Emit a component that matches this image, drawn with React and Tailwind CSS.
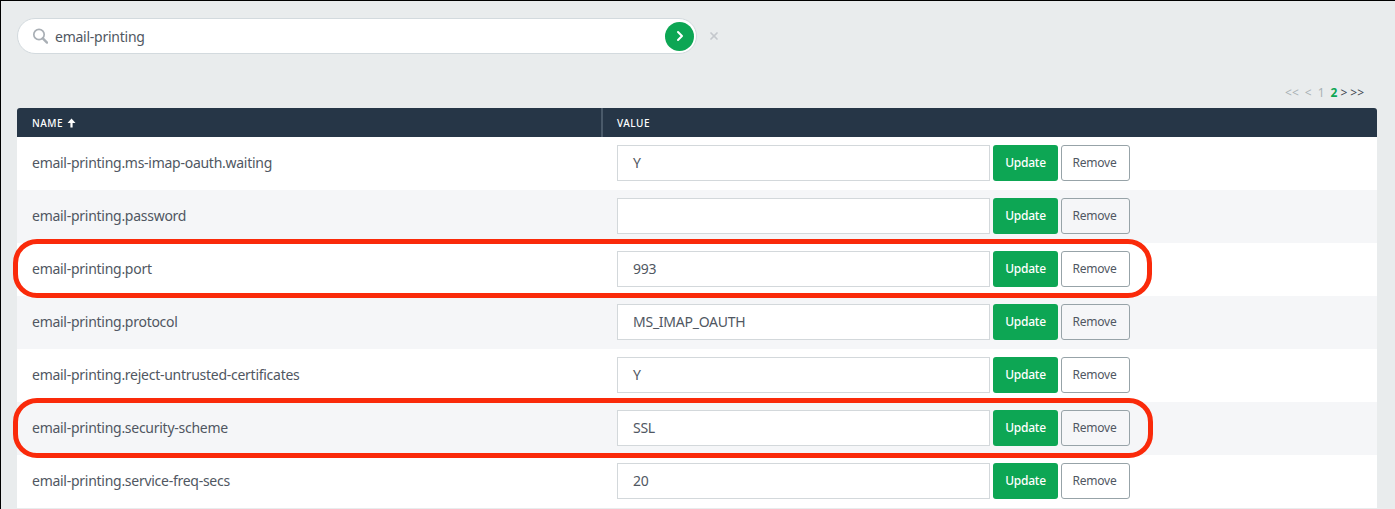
import { ChevronRight, X } from "lucide-react";

const rows = [
  { name: "email-printing.ms-imap-oauth.waiting", value: "Y" },
  { name: "email-printing.password", value: "" },
  { name: "email-printing.port", value: "993" },
  { name: "email-printing.protocol", value: "MS_IMAP_OAUTH" },
  { name: "email-printing.reject-untrusted-certificates", value: "Y" },
  { name: "email-printing.security-scheme", value: "SSL" },
  { name: "email-printing.service-freq-secs", value: "20" },
];

function Row({ row, index }) {
  const odd = index % 2 === 1;
  return (
    <div className={`flex h-[53px] shrink-0 ${odd ? "bg-[#f5f6f8]" : "bg-white"}`}>
      <div className="w-[600px] pl-[15px] pt-[16px] text-[14px] leading-[20px] text-[#505762] tracking-[-0.27px]">{row.name}</div>
      <div className="flex pt-[8px]">
        <div className="w-[373px] h-[36px] flex items-center pl-[15px] pb-[2px] bg-white border border-[#d3d8db] text-[14px] text-[#505762] tracking-[-0.25px]">
          {row.value}
        </div>
        <button className="ml-[3px] w-[65px] h-[36px] rounded-[3px] bg-[#0da654] text-white text-[12px] font-medium tracking-[-0.25px]">
          Update
        </button>
        <button className={`ml-[3px] w-[69px] h-[36px] pr-[2px] rounded-[3px] border border-[#97a3a8] text-[#505762] text-[12px] tracking-[-0.2px] ${odd ? "bg-[#f5f6f8]" : "bg-white"}`}>
          Remove
        </button>
      </div>
    </div>
  );
}

export default function App() {
  return (
    <div className="relative h-[509px] overflow-hidden bg-[#e9eced] border-t border-l border-black font-['Noto_Sans',sans-serif]">
      <div className="flex items-center pt-[17px] pl-[16px]">
        <div className="flex items-center w-[680px] h-[36px] bg-white border border-[#d3dade] rounded-full pl-[14px] pr-[2px]">
          <svg width="16" height="16" viewBox="0 0 16 16" fill="none" stroke="#a9afb5">
            <circle cx="7" cy="6.5" r="5.2" strokeWidth="1.7" />
            <path d="M10.8 10.4 15 14.6" strokeWidth="2.4" strokeLinecap="round" />
          </svg>
          <span className="ml-[7px] text-[14px] text-[#505762] tracking-[-0.25px] flex-1">email-printing</span>
          <div className="w-[29px] h-[29px] rounded-full bg-[#0da654] flex items-center justify-center">
            <ChevronRight size={16} strokeWidth={3} className="text-white" />
          </div>
        </div>
        <X size={12} strokeWidth={3.5} className="ml-[11px] text-[#c4c8cd]" />
      </div>

      <div className="flex justify-end items-center gap-[3px] h-[14px] mt-[32px] pr-[31px] text-[12px]">
        <span className="text-[#a9b2b5]">&lt;&lt;</span>
        <span className="text-[#a9b2b5] ml-[3px]">&lt;</span>
        <span className="text-[#a9b2b5] ml-[3px]">1</span>
        <span className="text-[#0da654] font-bold ml-[3px]">2</span>
        <span className="text-[#3f4650]">&gt;</span>
        <span className="text-[#3f4650]">&gt;&gt;</span>
      </div>

      <div className="mt-[8px] ml-[16px] w-[1360px] flex flex-col">
        <div className="flex items-center h-[29px] rounded-t-[3px] bg-[#263647] text-white text-[10px] font-medium tracking-[0.5px]">
          <div className="flex items-center gap-[4px] w-[586px] h-full pl-[15px] pt-[1px] border-r-2 border-[#4a5a6a]">
            NAME
            <svg width="9" height="10" viewBox="0 0 9 10" fill="white">
              <path d="M4.5 0.5 8.5 5H5.6V9.5H3.4V5H0.5Z" />
            </svg>
          </div>
          <div className="pl-[14px] pt-[1px]">VALUE</div>
        </div>
        {rows.map((row, i) => (
          <Row key={row.name} row={row} index={i} />
        ))}
      </div>

      {/* red callouts drawn over the screenshot */}
      <div className="absolute left-[12px] top-[238px] w-[1139px] h-[59px] rounded-[24px] border-[5px] border-[#fa2a0a]" />
      <div className="absolute left-[12px] top-[397px] w-[1140px] h-[60px] rounded-[24px] border-[5px] border-[#fa2a0a]" />
    </div>
  );
}
